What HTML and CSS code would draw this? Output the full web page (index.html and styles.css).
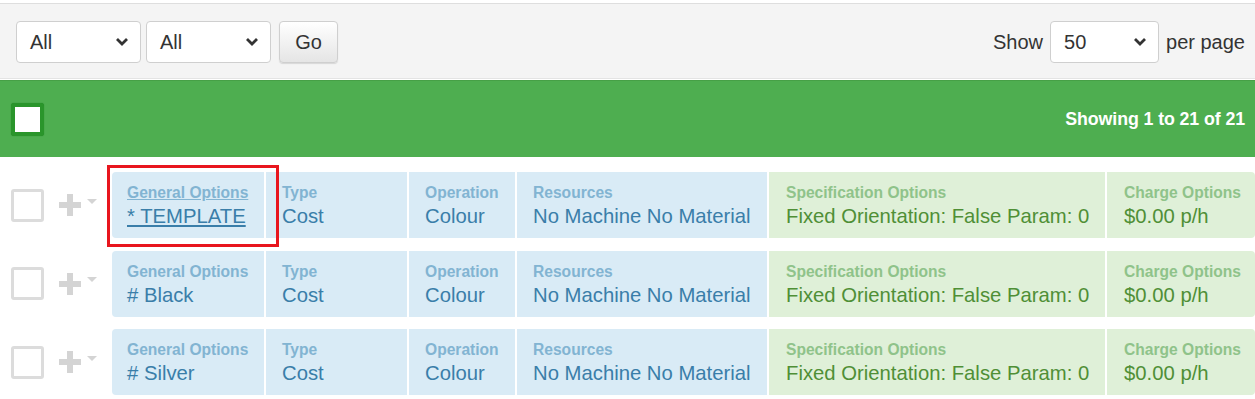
FILE: index.html
```html
<!DOCTYPE html>
<html lang="en">
<head>
  <meta charset="UTF-8">
  <title>Options</title>
  <link rel="stylesheet" href="styles.css">
</head>
<body>

<div class="toolbar">
  <div class="filters">
    <div class="select wide"><span>All</span><svg width="14" height="10" viewBox="0 0 14 10"><path d="M2 2l5 5 5-5" fill="none" stroke="#333" stroke-width="2.8"/></svg></div>
    <div class="select wide"><span>All</span><svg width="14" height="10" viewBox="0 0 14 10"><path d="M2 2l5 5 5-5" fill="none" stroke="#333" stroke-width="2.8"/></svg></div>
    <button class="btn">Go</button>
  </div>
  <div class="paging">
    <span>Show</span>
    <div class="select small"><span>50</span><svg width="14" height="10" viewBox="0 0 14 10"><path d="M2 2l5 5 5-5" fill="none" stroke="#333" stroke-width="2.8"/></svg></div>
    <span>per page</span>
  </div>
</div>

<div class="bar">
  <div class="check-all"></div>
  <div class="count">Showing 1 to 21 of 21</div>
</div>

<div class="list">
  <div class="row">
    <div class="ctrl">
      <div class="check"></div>
      <svg class="plus" width="26" height="26" viewBox="0 0 26 26"><path d="M13 2v22M2 13h22" stroke="#d4d4d4" stroke-width="6"/></svg>
      <svg class="caret" width="10" height="6" viewBox="0 0 10 6"><path d="M0 0h10L5 5z" fill="#d4d4d4"/></svg>
    </div>
    <div class="cell info c-gen"><a class="label" href="#">General Options</a><a class="value" href="#">* TEMPLATE</a></div>
    <div class="cell info c-type"><div class="label">Type</div><div class="value">Cost</div></div>
    <div class="cell info c-op"><div class="label">Operation</div><div class="value">Colour</div></div>
    <div class="cell info c-res"><div class="label">Resources</div><div class="value">No Machine No Material</div></div>
    <div class="cell ok c-spec"><div class="label">Specification Options</div><div class="value">Fixed Orientation: False Param: 0</div></div>
    <div class="cell ok c-charge"><div class="label">Charge Options</div><div class="value">$0.00 p/h</div></div>
    <div class="highlight"></div>
  </div>

  <div class="row">
    <div class="ctrl">
      <div class="check"></div>
      <svg class="plus" width="26" height="26" viewBox="0 0 26 26"><path d="M13 2v22M2 13h22" stroke="#d4d4d4" stroke-width="6"/></svg>
      <svg class="caret" width="10" height="6" viewBox="0 0 10 6"><path d="M0 0h10L5 5z" fill="#d4d4d4"/></svg>
    </div>
    <div class="cell info c-gen"><div class="label">General Options</div><div class="value"># Black</div></div>
    <div class="cell info c-type"><div class="label">Type</div><div class="value">Cost</div></div>
    <div class="cell info c-op"><div class="label">Operation</div><div class="value">Colour</div></div>
    <div class="cell info c-res"><div class="label">Resources</div><div class="value">No Machine No Material</div></div>
    <div class="cell ok c-spec"><div class="label">Specification Options</div><div class="value">Fixed Orientation: False Param: 0</div></div>
    <div class="cell ok c-charge"><div class="label">Charge Options</div><div class="value">$0.00 p/h</div></div>
  </div>

  <div class="row">
    <div class="ctrl">
      <div class="check"></div>
      <svg class="plus" width="26" height="26" viewBox="0 0 26 26"><path d="M13 2v22M2 13h22" stroke="#d4d4d4" stroke-width="6"/></svg>
      <svg class="caret" width="10" height="6" viewBox="0 0 10 6"><path d="M0 0h10L5 5z" fill="#d4d4d4"/></svg>
    </div>
    <div class="cell info c-gen"><div class="label">General Options</div><div class="value"># Silver</div></div>
    <div class="cell info c-type"><div class="label">Type</div><div class="value">Cost</div></div>
    <div class="cell info c-op"><div class="label">Operation</div><div class="value">Colour</div></div>
    <div class="cell info c-res"><div class="label">Resources</div><div class="value">No Machine No Material</div></div>
    <div class="cell ok c-spec"><div class="label">Specification Options</div><div class="value">Fixed Orientation: False Param: 0</div></div>
    <div class="cell ok c-charge"><div class="label">Charge Options</div><div class="value">$0.00 p/h</div></div>
  </div>
</div>

</body>
</html>
```

FILE: styles.css
```css
body {
  margin: 0;
  font-family: 'Liberation Sans', Arial, sans-serif;
  background: #fff;
  color: #333;
  overflow: hidden;
}
.toolbar {
  margin-top: 3px;
  border-top: 1px solid #dedede;
  border-bottom: 1px solid #e4e4e4;
  background: #f4f4f4;
  height: 76px;
  box-sizing: border-box;
  padding: 17px 10px 0 16px;
  display: flex;
  justify-content: space-between;
  align-items: flex-start;
}
.filters {
  display: flex;
  align-items: center;
}
.select {
  height: 42px;
  box-sizing: border-box;
  background: #fff;
  border: 1px solid #cfcfcf;
  border-radius: 4px;
  display: flex;
  align-items: center;
  justify-content: space-between;
  padding: 0 11px 0 13px;
  font-size: 20px;
  color: #333;
}
.select.wide {
  width: 125px;
  margin-right: 5px;
}
.select.small {
  width: 109px;
  margin: 0 7px;
}
.btn {
  margin-left: 3px;
  width: 59px;
  height: 42px;
  font-family: inherit;
  font-size: 20px;
  color: #333;
  background: linear-gradient(#fff, #e5e5e5);
  border: 1px solid #cfcfcf;
  border-radius: 4px;
  box-shadow: 0 1px 1px rgba(0,0,0,0.12);
}
.paging {
  display: flex;
  align-items: center;
  font-size: 20px;
  color: #333;
}
.bar {
  margin-top: 1px;
  height: 77px;
  background: #4eae50;
  border-top: 1px solid #46a046;
  box-sizing: border-box;
  display: flex;
  align-items: center;
  justify-content: space-between;
  padding: 0 10px 0 11px;
}
.check-all {
  width: 33px;
  height: 33px;
  box-sizing: border-box;
  background: #fff;
  border: 4px solid #2a952b;
  border-radius: 3px;
  box-shadow: 0 0 1px #1e7d20;
}
.count {
  color: #fff;
  font-weight: bold;
  font-size: 17.8px;
  letter-spacing: -0.1px;
}
.list {
  padding-top: 15px;
  display: flex;
  flex-direction: column;
  gap: 12.5px;
}
.row {
  position: relative;
  display: flex;
  height: 66px;
  gap: 2px;
}
.ctrl {
  width: 110px;
  display: flex;
  align-items: center;
  padding-left: 11px;
  box-sizing: border-box;
}
.check {
  width: 33px;
  height: 33px;
  box-sizing: border-box;
  border: 3px solid #dcdcdc;
  border-radius: 3px;
}
.plus {
  margin-left: 13px;
}
.caret {
  margin-left: 4px;
  margin-top: -7px;
}
.cell {
  box-sizing: border-box;
  padding: 12px 0 0 16px;
  display: flex;
  flex-direction: column;
}
.c-gen { width: 152px; border-radius: 4px 0 0 4px; padding-left: 15px; }
.c-type { width: 141px; }
.c-op { width: 106px; }
.c-res { width: 250px; }
.c-spec { width: 336px; padding-left: 17px; }
.c-charge { width: 148px; border-radius: 0 4px 4px 0; padding-left: 17px; }
.label {
  font-size: 15.6px;
  font-weight: bold;
  line-height: 17px;
}
.value {
  margin-top: 3px;
  font-size: 20.3px;
  line-height: 25px;
  white-space: nowrap;
}
.info { background: #d9ebf6; }
.info .label { color: #82b4d2; }
.info .value { color: #3a7ea9; }
.ok { background: #dff0d8; }
.ok .label { color: #8fc38a; }
.ok .value { color: #4f8f36; }
a.label, a.value {
  text-decoration: underline;
  align-self: flex-start;
}
.highlight {
  position: absolute;
  left: 107px;
  top: -7px;
  width: 172px;
  height: 82px;
  box-sizing: border-box;
  border: 3px solid #e8161e;
}
```
